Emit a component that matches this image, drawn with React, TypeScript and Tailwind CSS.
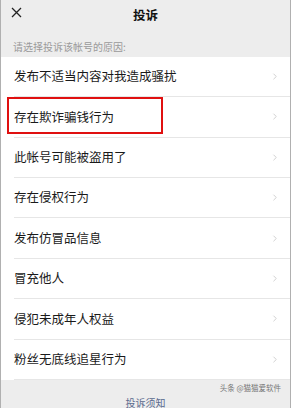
import { ChevronRight } from "lucide-react";

const reasons = [
  "发布不适当内容对我造成骚扰",
  "存在欺诈骗钱行为",
  "此帐号可能被盗用了",
  "存在侵权行为",
  "发布仿冒品信息",
  "冒充他人",
  "侵犯未成年人权益",
  "粉丝无底线追星行为",
];

const font = { fontFamily: '"Noto Sans CJK SC", "Noto Sans", sans-serif' };

const ReasonRow = ({ text, highlighted }: { text: string; highlighted?: boolean }) => {
  return (
    <div className="relative flex h-[40.4px] items-center bg-white pl-[13px]">
      <div className="flex h-full grow items-center border-b border-[#e6e6e6] pr-[10px]">
        <p className="grow text-[12.5px] leading-none text-[#1a1a1a]">{text}</p>
        <ChevronRight className="h-[13px] w-[10px] text-[#b5b5b5]" strokeWidth={1.5} />
      </div>
      {highlighted && (
        <div className="absolute left-[6px] top-0 h-[37px] w-[156px] border-[2.5px] border-[#e01010]" />
      )}
    </div>
  );
};

export default function App() {
  return (
    <div
      className="flex h-[408px] w-[291px] flex-col overflow-hidden border-x border-[#b0b0b0] bg-[#ededed]"
      style={font}
    >
      <div className="relative flex h-[30px] items-center justify-center">
        <svg
          className="absolute left-[10px] top-[7px]"
          width="11"
          height="11"
          viewBox="0 0 11 11"
          fill="none"
          stroke="#222"
          strokeWidth="1.3"
        >
          <path d="M1 1 L10 10 M10 1 L1 10" />
        </svg>
        <p className="text-[12.5px] font-bold leading-none text-[#111]">投诉</p>
      </div>
      <div className="flex h-[27px] items-center pl-[12px] pt-[8px]">
        <p className="text-[10px] leading-none text-[#9a9a9a]">请选择投诉该帐号的原因:</p>
      </div>
      <div className="flex flex-col">
        {reasons.map((r, i) => (
          <ReasonRow key={r} text={r} highlighted={i === 1} />
        ))}
      </div>
      <div className="relative flex grow justify-center pt-[18px]">
        <p className="text-[10px] leading-none text-[#5a6a8e]">投诉须知</p>
        <p className="absolute right-[9px] top-[4px] text-[7.5px] leading-none text-[#777]">
          头条 @猫猫爱软件
        </p>
      </div>
    </div>
  );
}
